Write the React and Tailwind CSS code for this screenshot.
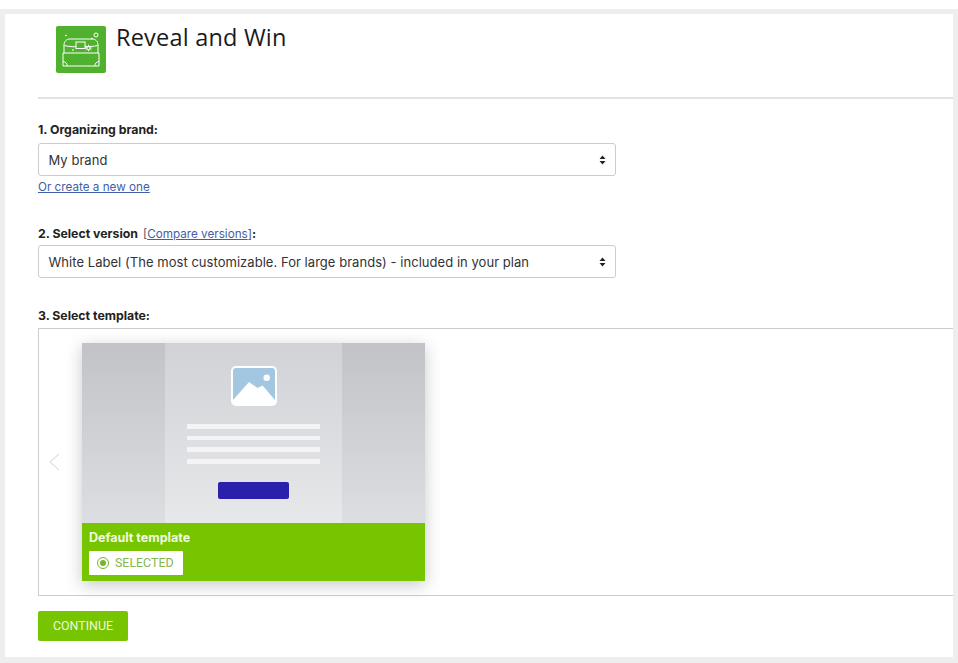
import React from 'react';

const TreasureIcon = () => (
  <svg viewBox="0 0 50 47" className="w-[50px] h-[47px]" fill="none" stroke="#fff" strokeWidth="1">
    <path d="M7 40V27H43V40Z" />
    <path d="M7 35.500c2.500 .2 4 2 4.300 4.500M43 35.500c-2.500 .2-4 2-4.300 4.500" />
    <path d="M8 27V19c0-3.500 2.500-6 6-6h22c3.500 0 6 2.500 6 6v8" />
    <path d="M8.500 19.500c3.500 1 7.500 1.300 11.500 1.300M29 20.800c4.500 0 9-.4 12.500-1.300" />
    <rect x="20" y="16" width="9" height="6.500" />
    <circle cx="32.500" cy="22" r="1.700" />
    <path d="M32.500 18.800v1.500M32.500 23.700v1.500M29.300 22h1.500M34.200 22h1.500M30.200 19.700l1.100 1.100M33.700 23.200l1.100 1.100M34.800 19.700l-1.100 1.100M31.300 23.200l-1.100 1.100" />
    <circle cx="40" cy="9" r="2" />
    <circle cx="10" cy="9.500" r="0.500" fill="#fff" />
    <circle cx="36" cy="12.500" r="0.500" fill="#fff" />
    <circle cx="17" cy="24" r="0.400" fill="#fff" />
  </svg>
);

const PictureIcon = () => (
  <svg viewBox="0 0 46 40" className="w-[46px] h-[40px]">
    <rect x="1" y="1" width="44" height="38" rx="4" fill="#a3c7e0" stroke="#fff" strokeWidth="2" />
    <path d="M2 34L18 16L26.500 22L31.500 19.500L44 34V36a3 3 0 0 1-3 3H5a3 3 0 0 1-3-3Z" fill="#fff" />
    <circle cx="35.700" cy="11.700" r="3.200" fill="#fff" />
  </svg>
);

const SelectBox = ({ value }) => (
  <div className="w-[578px] h-[33px] border border-[#ccc] rounded-[3px] bg-white flex items-center justify-between pl-[9.500px] pr-[9px] text-[13px] tracking-[0.04px] text-[#333] shrink-0">
    <span className="pt-[2px]">{value}</span>
    <svg viewBox="0 0 7 10" className="w-[7px] h-[10px]" fill="#222">
      <path d="M3.500 0.500L6.500 4H0.500ZM3.500 9.500L0.500 6H6.500Z" />
    </svg>
  </div>
);

const TemplateCard = () => (
  <div className="w-[343px] shadow-[0_4px_16px_rgba(0,0,0,0.22)]">
    <div className="h-[180px] flex bg-gradient-to-b from-[#c2c3c6] to-[#dddee2]">
      <div className="w-[83px]" />
      <div className="w-[177px] h-full bg-gradient-to-b from-[#d1d2d6] to-[#e7e8ea] flex flex-col items-center pt-[23px]">
        <PictureIcon />
        <div className="flex flex-col gap-[7.200px] mt-[18px]">
          <div className="w-[133px] h-[4.500px] bg-[#f4f4f6]" />
          <div className="w-[133px] h-[4.500px] bg-[#f4f4f6]" />
          <div className="w-[133px] h-[4.500px] bg-[#f4f4f6]" />
          <div className="w-[133px] h-[4.500px] bg-[#f4f4f6]" />
        </div>
        <div className="w-[71px] h-[17px] rounded-[2px] bg-[#2a20ab] mt-[18px]" />
      </div>
    </div>
    <div className="h-[58px] bg-[#76c500] pl-[7px] pt-[7px]">
      <div className="text-[12.500px] leading-[16px] font-bold text-[#f1fadf]">Default template</div>
      <div className="w-[94px] h-[24px] mt-[5px] bg-white rounded-[1px] flex items-center pl-[8px] gap-[6px]">
        <span className="w-[12px] h-[12px] rounded-full border border-[#76b52a] flex items-center justify-center">
          <span className="w-[6px] h-[6px] rounded-full bg-[#76b52a]" />
        </span>
        <span className="text-[12.400px] text-[#86b84a] font-['Roboto',sans-serif]">SELECTED</span>
      </div>
    </div>
  </div>
);

export default function App() {
  return (
    <div className="w-[958px] h-[663px] overflow-hidden bg-white font-['Inter',sans-serif]">
      <div className="h-[9px]" />
      <div className="h-[654px] bg-[#eeeeee] pt-[5px] px-[5px] pb-[6px]">
        <div className="h-[643px] bg-white pl-[33px] flex flex-col">
          <div className="h-[85px] flex pl-[18px] pt-[12px] border-b-2 border-[#e2e2e2] shrink-0">
            <div className="w-[50px] h-[47px] rounded-[2px] bg-[#4fb12e]">
              <TreasureIcon />
            </div>
            <h1 className="ml-[10px] -mt-[4px] text-[23.500px] leading-[30px] text-[#1a1a1a] font-['Open_Sans',sans-serif] tracking-[0.2px]">Reveal and Win</h1>
          </div>

          <label className="mt-[24px] text-[12.300px] leading-[14px] font-bold text-[#222]">1. Organizing brand:</label>
          <div className="mt-[6px]"><SelectBox value="My brand" /></div>
          <a className="mt-[4px] text-[11.700px] leading-[14px] text-[#3f5fa8] underline">Or create a new one</a>

          <label className="mt-[33px] text-[12.300px] leading-[14px] font-bold text-[#222]">
            2. Select version <span className="ml-[2px] text-[11.700px] font-normal text-[#555]">[<a className="text-[#3f5fa8] underline">Compare versions</a>]</span>:
          </label>
          <div className="mt-[4px]"><SelectBox value="White Label (The most customizable. For large brands) - included in your plan" /></div>

          <label className="mt-[31px] text-[12.300px] leading-[14px] font-bold text-[#222]">3. Select template:</label>
          <div className="mt-[5px] h-[268px] border border-r-0 border-[#cccccc] flex items-start pt-[14px] relative">
            <svg viewBox="0 0 12 18" className="w-[12px] h-[18px] ml-[9px] mt-[110px]" fill="none" stroke="#cfd2d6">
              <path d="M11 1L2 9L11 17" />
            </svg>
            <div className="ml-[22px]"><TemplateCard /></div>
          </div>

          <button className="mt-[15px] w-[90px] h-[30px] bg-[#76c500] rounded-[2px] text-[12.400px] text-[#eef8de] font-['Roboto',sans-serif]">CONTINUE</button>
        </div>
      </div>
    </div>
  );
}
